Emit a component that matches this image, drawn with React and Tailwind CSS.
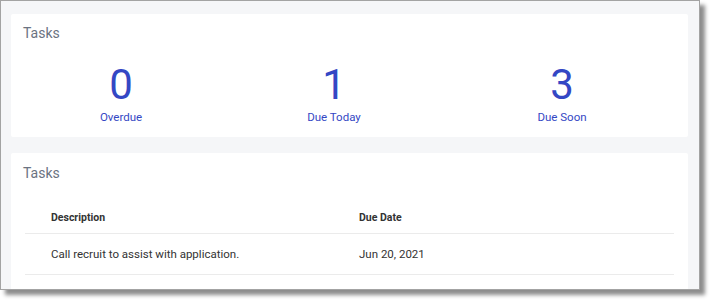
export default function App() {
  const stats = [
    { n: "0", label: "Overdue" },
    { n: "1", label: "Due Today" },
    { n: "3", label: "Due Soon" },
  ];
  return (
    <div className="w-[716px] h-[306px] bg-white font-['Roboto',sans-serif]">
      <div className="w-[700px] h-[290px] border border-[#a3a3a3] bg-[#f5f6f8] shadow-[5px_5px_4px_rgba(0,0,0,0.45)] overflow-hidden pt-[13px] pl-[10px] pr-[11px]">
        <div className="bg-white h-[123px] rounded-[2px] px-3 pt-[9px]">
          <h2 className="text-[14px] leading-5 text-[#6b7382]">Tasks</h2>
          <div className="grid grid-cols-[220px_206px_250px] -mx-3 mt-[21px]">
            {stats.map((s) => (
              <div key={s.label} className="flex flex-col items-center text-[#3447c4]">
                <div className="text-[42px] leading-[42px]">{s.n}</div>
                <div className="text-[11.5px] leading-4 mt-[3px]">{s.label}</div>
              </div>
            ))}
          </div>
        </div>
        <div className="mt-[16px] bg-white h-[140px] rounded-[2px] px-3 pt-[10px]">
          <h2 className="text-[14px] leading-5 text-[#6b7382]">Tasks</h2>
          <div className="mx-[2px]">
            <div className="flex items-end h-[51px] pb-[8px] border-b border-[#ebebeb] text-[10.5px] leading-[14px] font-bold text-[#333]">
              <div className="w-[308px] pl-[26px]">Description</div>
              <div className="pl-[26px]">Due Date</div>
            </div>
            <div className="flex pt-[12px] pb-[12px] border-b border-[#ebebeb] text-[11.5px] leading-4 text-[#333]">
              <div className="w-[308px] pl-[26px]">Call recruit to assist with application.</div>
              <div className="pl-[26px]">Jun 20, 2021</div>
            </div>
          </div>
        </div>
      </div>
    </div>
  );
}
